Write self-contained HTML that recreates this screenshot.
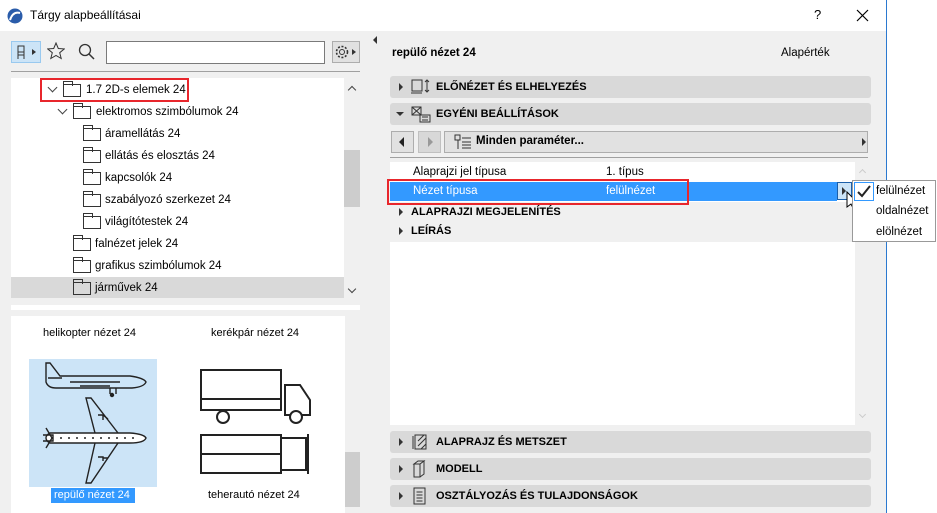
<!DOCTYPE html>
<html><head><meta charset="utf-8"><style>
*{box-sizing:border-box;margin:0;padding:0}
body{width:937px;height:513px;background:#fff;font-family:"Liberation Sans",sans-serif;font-size:11.5px;color:#000;position:relative;overflow:hidden}
.a{position:absolute}
.win{left:0;top:0;width:887px;height:513px;background:#f0f0f0;border-right:1px solid #2b79d0}
.title{left:0;top:0;width:886px;height:31px;background:#fff}
.t{white-space:nowrap}
.fold{display:inline-block;width:18px;height:13px;border:1px solid #333;position:absolute}
.fold:before{content:"";position:absolute;left:-1px;top:-4px;width:8px;height:4px;border:1px solid #333;border-bottom:none}
.row{position:absolute;height:22px;line-height:22px;white-space:nowrap}
.sec{position:absolute;left:390px;width:481px;height:22px;background:#d9d9d9;border-radius:3px;font-weight:bold;font-size:11px;line-height:22px}
.tri{position:absolute;width:0;height:0;border-top:4px solid transparent;border-bottom:4px solid transparent;border-left:4px solid #333}
.trid{position:absolute;width:0;height:0;border-left:4px solid transparent;border-right:4px solid transparent;border-top:4px solid #333}
.chev{position:absolute;width:7px;height:7px;border-right:1.5px solid #444;border-bottom:1.5px solid #444;transform:rotate(45deg)}
</style></head><body>
<div class="a win"></div>
<div class="a title"></div>
<svg class="a" style="left:7px;top:8px" width="16" height="16"><circle cx="8" cy="8" r="7.5" fill="#2a5caa"/><path d="M3 12 Q6 3 13 5" stroke="#fff" stroke-width="2" fill="none"/></svg>
<div class="a t" style="left:30px;top:8px;font-size:12px">Tárgy alapbeállításai</div>
<div class="a t" style="left:814px;top:7px;font-size:13px">?</div>
<svg class="a" style="left:856px;top:9px" width="13" height="13"><path d="M1 1L12 12M12 1L1 12" stroke="#000" stroke-width="1.2"/></svg>
<div class="tri" style="left:373px;top:36px;border-left:none;border-right:4px solid #333"></div>
<!-- toolbar -->
<div class="a" style="left:11px;top:41px;width:30px;height:22px;background:#cce4f7;border:1px solid #99c9ef"></div>
<svg class="a" style="left:15px;top:44px" width="24" height="16"><path d="M3 2h6v6H3zM3 8v7M9 8v7M3 11h6" stroke="#333" fill="none"/><path d="M17 5l4 3-4 3z" fill="#333"/></svg>
<svg class="a" style="left:47px;top:42px" width="18" height="18"><path d="M9 1l2.3 5.5 6 .4-4.6 3.8 1.5 5.8L9 13.4 3.8 16.5l1.5-5.8L.7 6.9l6-.4z" stroke="#333" fill="none"/></svg>
<svg class="a" style="left:78px;top:43px" width="18" height="18"><circle cx="7" cy="7" r="5.5" stroke="#333" fill="none" stroke-width="1.3"/><path d="M11 11l5 5" stroke="#333" stroke-width="1.5"/></svg>
<div class="a" style="left:106px;top:41px;width:219px;height:23px;background:#fff;border:1px solid #7a7a7a"></div>
<div class="a" style="left:332px;top:41px;width:28px;height:22px;background:#e1e1e1;border:1px solid #adadad"></div>
<svg class="a" style="left:334px;top:44px" width="24" height="16"><circle cx="8" cy="8" r="5.5" stroke="#333" fill="none" stroke-width="1.6" stroke-dasharray="2 1.6"/><circle cx="8" cy="8" r="2.5" stroke="#333" fill="none"/><path d="M18 5l4 3-4 3z" fill="#333"/></svg>
<div class="a" style="left:11px;top:71px;width:349px;height:1px;background:#a0a0a0"></div>
<!-- tree -->
<div class="a" style="left:11px;top:78px;width:333px;height:220px;background:#fff"></div>
<div class="a" style="left:344px;top:78px;width:16px;height:220px;background:#f0f0f0"></div>
<div class="a" style="left:344px;top:150px;width:16px;height:57px;background:#cdcdcd"></div>
<div class="chev" style="left:349px;top:87px;transform:rotate(225deg);width:6px;height:6px"></div>
<div class="chev" style="left:349px;top:286px;width:6px;height:6px"></div>
<div class="a" style="left:11px;top:277px;width:333px;height:21px;background:#d9d9d9"></div>
<div class="a" style="left:40px;top:78px;width:149px;height:24px;border:2px solid #e8262c"></div>
<div class="chev" style="left:49px;top:84px"></div>
<div class="fold" style="left:63px;top:84px"></div><div class="row" style="left:86px;top:79px">1.7 2D-s elemek 24</div>
<div class="chev" style="left:59px;top:106px"></div>
<div class="fold" style="left:73px;top:106px"></div><div class="row" style="left:96px;top:101px">elektromos szimbólumok 24</div>
<div class="fold" style="left:83px;top:128px"></div><div class="row" style="left:105px;top:123px">áramellátás 24</div>
<div class="fold" style="left:83px;top:150px"></div><div class="row" style="left:105px;top:145px">ellátás és elosztás 24</div>
<div class="fold" style="left:83px;top:172px"></div><div class="row" style="left:105px;top:167px">kapcsolók 24</div>
<div class="fold" style="left:83px;top:194px"></div><div class="row" style="left:105px;top:189px">szabályozó szerkezet 24</div>
<div class="fold" style="left:83px;top:216px"></div><div class="row" style="left:105px;top:211px">világítótestek 24</div>
<div class="fold" style="left:73px;top:238px"></div><div class="row" style="left:95px;top:233px">falnézet jelek 24</div>
<div class="fold" style="left:73px;top:260px"></div><div class="row" style="left:95px;top:255px">grafikus szimbólumok 24</div>
<div class="fold" style="left:73px;top:282px"></div><div class="row" style="left:95px;top:277px">járművek 24</div>
<div class="a" style="left:11px;top:305px;width:349px;height:5px;background:#fff"></div>
<!-- preview -->
<div class="a" style="left:11px;top:316px;width:334px;height:197px;background:#fff"></div>
<div class="a" style="left:345px;top:316px;width:15px;height:197px;background:#f0f0f0"></div>
<div class="a" style="left:345px;top:452px;width:15px;height:55px;background:#cdcdcd"></div>
<div class="a t" style="left:43px;top:327px;font-size:11px">helikopter nézet 24</div>
<div class="a t" style="left:211px;top:327px;font-size:11px">kerékpár nézet 24</div>
<div class="a" style="left:29px;top:359px;width:128px;height:128px;background:#cce4f7"></div>
<svg class="a" style="left:40px;top:360px" width="110" height="126" fill="none" stroke="#222" stroke-width="1.4">
<path d="M6 3h4l10 13h70q14 2 16 6q-2 5-14 6H16q-8 0-10-6z"/><path d="M8 18h14M30 22h50M40 26h30"/><path d="M70 28v6M76 28v6"/><circle cx="72" cy="35" r="1.5" fill="#222"/>
<path d="M10 73h80q14 1 16 5q-2 5-16 5H10q-4-2-4-5q0-3 4-5z" fill="#fff"/>
<path d="M6 68l6 10-6 10M3 75h10v6H3"/>
<path d="M55 73L46 38h5L78 73M55 83L46 123h5L78 83"/>
<path d="M58 55h5v5M63 55l5 4M63 98h5M58 97h5v4"/>
<path d="M20 78h80" stroke-dasharray="2 6"/>
</svg>
<div class="a" style="left:51px;top:488px;width:84px;height:15px;background:#3399ff"></div>
<div class="a t" style="left:54px;top:489px;font-size:11px;color:#fff">repülő nézet 24</div>
<svg class="a" style="left:198px;top:365px" width="118" height="60" fill="none" stroke="#222" stroke-width="2">
<path d="M3 5h80v40H3zM3 34h80M87 20h15l10 15v15H87zM87 50V20"/><circle cx="25" cy="52" r="6" fill="#fff"/><circle cx="98" cy="52" r="6" fill="#fff"/>
</svg>
<svg class="a" style="left:198px;top:432px" width="118" height="45" fill="none" stroke="#222" stroke-width="2">
<path d="M3 3h80v38H3zM3 22h80M83 6h25v32H83M110 2v40"/>
</svg>
<div class="a t" style="left:208px;top:489px;font-size:11px">teherautó nézet 24</div>
<!-- right -->
<div class="a t" style="left:392px;top:47px;font-weight:bold;font-size:11.5px">repülő nézet 24</div>
<div class="a t" style="left:781px;top:47px;font-size:11.5px">Alapérték</div>
<div class="sec" style="top:76px"><div class="tri" style="left:9px;top:7px"></div><span style="position:absolute;left:46px">ELŐNÉZET ÉS ELHELYEZÉS</span></div>
<svg class="a" style="left:410px;top:78px" width="22" height="18" fill="none" stroke="#333"><rect x="2" y="2" width="10" height="11"/><path d="M1 15h11M17 2v12M15 4l2-2 2 2M15 12l2 2 2-2"/></svg>
<div class="sec" style="top:103px"><div class="trid" style="left:6px;top:9px"></div><span style="position:absolute;left:46px">EGYÉNI BEÁLLÍTÁSOK</span></div>
<svg class="a" style="left:410px;top:105px" width="22" height="18" fill="none" stroke="#333"><rect x="2" y="2" width="9" height="8"/><path d="M2 2l9 8M11 2l-9 8"/><rect x="10" y="10" width="10" height="7"/><path d="M12 12h6M12 15h6"/></svg>
<div class="a" style="left:391px;top:131px;width:23px;height:22px;background:#e1e1e1;border:1px solid #adadad"></div>
<div class="tri" style="left:399px;top:137px;border-width:5px 5px 5px 0;border-right:5px solid #222;border-left:none"></div>
<div class="a" style="left:418px;top:131px;width:23px;height:22px;background:#d8d8d8;border:1px solid #c0c0c0"></div>
<div class="tri" style="left:428px;top:137px;border-width:5px 0 5px 5px;border-left-color:#999"></div>
<div class="a" style="left:444px;top:131px;width:424px;height:22px;background:#e1e1e1;border:1px solid #adadad"></div>
<svg class="a" style="left:454px;top:134px" width="18" height="17" fill="none" stroke="#333"><rect x="1" y="1" width="5" height="5"/><path d="M4 6v9M8 4h9M8 8h9M8 11h9M8 14h9"/></svg>
<div class="a t" style="left:476px;top:135px;font-weight:bold">Minden paraméter...</div>
<div class="tri" style="left:862px;top:138px"></div>
<div class="a" style="left:390px;top:157px;width:478px;height:1px;background:#a0a0a0"></div>
<div class="a" style="left:390px;top:162px;width:465px;height:263px;background:#fff"></div>
<div class="a" style="left:390px;top:202px;width:465px;height:40px;background:#f0f0f0"></div>
<div class="a t" style="left:413px;top:166px">Alaprajzi jel típusa</div>
<div class="a t" style="left:606px;top:166px">1. típus</div>
<div class="a" style="left:390px;top:182px;width:447px;height:19px;background:#3399ff"></div>
<div class="a t" style="left:413px;top:185px;color:#fff">Nézet típusa</div>
<div class="a t" style="left:606px;top:185px;color:#fff">felülnézet</div>
<div class="a" style="left:387px;top:179px;width:302px;height:26px;border:2px solid #e8262c"></div>
<div class="a" style="left:837px;top:182px;width:15px;height:18px;background:#cce4f7;border:1px solid #1c5fa8"></div>
<div class="tri" style="left:842px;top:187px"></div>
<svg class="a" style="left:846px;top:191px" width="14" height="22"><path d="M1 1v15l4-3 3 6 2-1-3-6h5z" fill="#fff" stroke="#000"/></svg>
<div class="tri" style="left:399px;top:208px"></div><div class="a t" style="left:411px;top:206px;font-weight:bold;font-size:11px">ALAPRAJZI MEGJELENÍTÉS</div>
<div class="tri" style="left:399px;top:227px"></div><div class="a t" style="left:411px;top:225px;font-weight:bold;font-size:11px">LEÍRÁS</div>
<div class="chev" style="left:860px;top:170px;transform:rotate(225deg);width:5px;height:5px;border-color:#ccc"></div>
<div class="chev" style="left:860px;top:412px;width:5px;height:5px;border-color:#ccc"></div>
<div class="a" style="left:852px;top:180px;width:84px;height:62px;background:#fff;border:1px solid #999"></div>
<div class="a" style="left:854px;top:182px;width:20px;height:19px;border:1px solid #3399ff;background:#fff"></div>
<svg class="a" style="left:857px;top:185px" width="14" height="13"><path d="M1 7l4 4 8-10" stroke="#222" stroke-width="2" fill="none"/></svg>
<div class="a t" style="left:876px;top:185px">felülnézet</div>
<div class="a t" style="left:876px;top:205px">oldalnézet</div>
<div class="a t" style="left:876px;top:226px">elölnézet</div>
<div class="sec" style="top:431px"><div class="tri" style="left:9px;top:7px"></div><span style="position:absolute;left:46px">ALAPRAJZ ÉS METSZET</span></div>
<svg class="a" style="left:410px;top:433px" width="20" height="18" fill="none" stroke="#333"><rect x="5" y="2" width="11" height="14"/><path d="M3 3v13M8 8l6-6M8 13l8-8M11 16l5-5"/></svg>
<div class="sec" style="top:458px"><div class="tri" style="left:9px;top:7px"></div><span style="position:absolute;left:46px">MODELL</span></div>
<svg class="a" style="left:410px;top:460px" width="20" height="18" fill="none" stroke="#333"><path d="M4 4l4-3h6l-4 3zM4 4h6v13H4zM10 4l4-3v13l-4 3"/></svg>
<div class="sec" style="top:485px"><div class="tri" style="left:9px;top:7px"></div><span style="position:absolute;left:46px">OSZTÁLYOZÁS ÉS TULAJDONSÁGOK</span></div>
<svg class="a" style="left:410px;top:487px" width="20" height="18" fill="none" stroke="#333"><rect x="4" y="1" width="11" height="16"/><path d="M6.5 5h6M6.5 8h6M6.5 11h6M6.5 14h6"/></svg>
</body></html>
